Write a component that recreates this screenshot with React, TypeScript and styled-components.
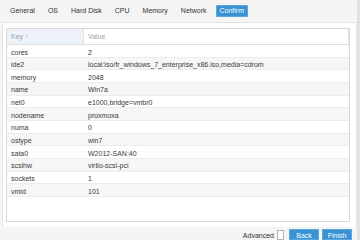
import React from 'react';
import styled, { createGlobalStyle } from 'styled-components';

const GlobalStyle = createGlobalStyle`
  html, body {
    margin: 0;
    padding: 0;
    background: #f5f5f5;
    font-family: "Liberation Sans", Arial, sans-serif;
  }
`

const Window = styled.div`
  width: 360px;
  height: 240px;
  display: flex;
  flex-direction: column;
  background: #f5f5f5;
  overflow: hidden;
  border-right: 3px solid #e2e2e2;
  box-sizing: border-box;
`

const TabBar = styled.div`
  height: 22px;
  display: flex;
  align-items: center;
  padding-left: 3.5px;
  box-sizing: border-box;
`

const Tab = styled.div<{ active?: boolean }>`
  font-size: 7px;
  color: ${(p) => (p.active ? '#ffffff' : '#333333')};
  background: ${(p) => (p.active ? '#3892d4' : 'transparent')};
  border: 1px solid ${(p) => (p.active ? '#5aa6de' : 'transparent')};
  height: 10px;
  line-height: 10px;
  padding: 0 ${(p) => (p.active ? '3px' : '5.5px')};
  margin: 0 ${(p) => (p.active ? '2.5px' : '0')};
  border-radius: 1px;
`

const Panel = styled.div`
  flex: 1;
  margin-left: 2px;
  background: #ffffff;
  border: 1px solid #e4e4e4;
  border-bottom: none;
  padding: 5px 6px 5px 3px;
  display: flex;
  flex-direction: column;
`

const Grid = styled.div`
  flex: 1;
  border: 1px solid #d8d8d8;
  display: flex;
  flex-direction: column;
`

const HeaderRow = styled.div`
  height: 16px;
  display: grid;
  grid-template-columns: 77px 1fr;
  border-bottom: 1px solid #e0e0e0;
  box-sizing: border-box;
`

const HeaderCell = styled.div<{ sorted?: boolean }>`
  font-size: 7px;
  color: #a0a0a0;
  background: ${(p) => (p.sorted ? '#edf3f9' : '#ffffff')};
  border-right: 1px solid #e4e4e4;
  padding-left: 4px;
  line-height: 15px;
`

const Row = styled.div<{ alt?: boolean }>`
  height: 12.67px;
  display: grid;
  grid-template-columns: 77px 1fr;
  background: ${(p) => (p.alt ? '#f6f6f6' : '#ffffff')};
  border-bottom: 1px solid #ececec;
  box-sizing: border-box;
`

const Cell = styled.div`
  font-size: 7px;
  color: #3a3a3a;
  padding-left: 4px;
  padding-top: 2.5px;
  line-height: 9px;
  white-space: nowrap;
  overflow: hidden;
`

const Footer = styled.div`
  height: 13px;
  display: flex;
  justify-content: flex-end;
  align-items: flex-end;
  gap: 3px;
  padding-right: 5px;
`

const Label = styled.span`
  font-size: 7px;
  color: #333333;
  align-self: center;
  margin-top: 4px;
`

const Check = styled.div`
  width: 5px;
  height: 8px;
  border: 1px solid #b5b5b5;
  background: #ffffff;
  margin-right: 2px;
`

const Button = styled.div`
  width: 28px;
  height: 9px;
  background: #3892d4;
  border: 1px solid #5aa6de;
  color: #ffffff;
  font-size: 7px;
  text-align: center;
  line-height: 11px;
`

const TABS = ['General', 'OS', 'Hard Disk', 'CPU', 'Memory', 'Network', 'Confirm']

const DATA: [string, string][] = [
  ['cores', '2'],
  ['ide2', 'local:iso/fr_windows_7_enterprise_x86.iso,media=cdrom'],
  ['memory', '2048'],
  ['name', 'Win7a'],
  ['net0', 'e1000,bridge=vmbr0'],
  ['nodename', 'proxmoxa'],
  ['numa', '0'],
  ['ostype', 'win7'],
  ['sata0', 'W2012-SAN:40'],
  ['scsihw', 'virtio-scsi-pci'],
  ['sockets', '1'],
  ['vmid', '101'],
]

export default function App() {
  return <Window>
    <GlobalStyle />
    <TabBar>
      {TABS.map(t => <Tab key={t} active={t === 'Confirm'}>{t}</Tab>)}
    </TabBar>
    <Panel>
      <Grid>
        <HeaderRow>
          <HeaderCell sorted>Key ↑</HeaderCell>
          <HeaderCell>Value</HeaderCell>
        </HeaderRow>
        {DATA.map(([k, v], i) => <Row key={k} alt={i % 2 === 1}>
          <Cell>{k}</Cell>
          <Cell>{v}</Cell>
        </Row>)}
      </Grid>
    </Panel>
    <Footer>
      <Label>Advanced</Label>
      <Check />
      <Button>Back</Button>
      <Button>Finish</Button>
    </Footer>
  </Window>
}
